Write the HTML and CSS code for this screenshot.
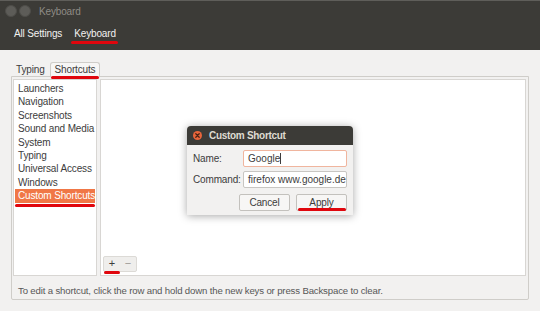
FILE: index.html
```html
<!DOCTYPE html>
<html lang="en">
<head>
    <meta charset="UTF-8">
    <meta name="viewport" content="width=device-width, initial-scale=1.0">
    <title>Keyboard</title>
    <link rel="stylesheet" href="styles.css">
</head>
<body>

    <div class="window">
        <!-- Dark header: title bar + breadcrumb -->
        <div class="header">
            <div class="titlebar">
                <span class="wbtn"></span>
                <span class="wbtn"></span>
                <span class="title">Keyboard</span>
            </div>
            <div class="crumbs">
                <span class="crumb">All Settings</span>
                <span class="crumb current mark">Keyboard</span>
            </div>
        </div>

        <div class="content">
            <div class="tabs">
                <span class="tab">Typing</span>
                <span class="tab active mark">Shortcuts</span>
            </div>

            <div class="notebook">
                <div class="panes">
                    <ul class="categories">
                        <li>Launchers</li>
                        <li>Navigation</li>
                        <li>Screenshots</li>
                        <li>Sound and Media</li>
                        <li>System</li>
                        <li>Typing</li>
                        <li>Universal Access</li>
                        <li>Windows</li>
                        <li class="selected mark">Custom Shortcuts</li>
                    </ul>
                    <div class="shortcuts">
                        <div class="toolbar">
                            <span class="tool mark">+</span>
                            <span class="tool dim">&minus;</span>
                        </div>
                    </div>
                </div>
                <p class="hint">To edit a shortcut, click the row and hold down the new keys or press Backspace to clear.</p>
            </div>
        </div>

        <!-- Custom shortcut dialog -->
        <div class="dialog">
            <div class="dialog-title">
                <span class="close">
                    <svg width="9" height="9" viewBox="0 0 9 9"><path d="M2.8 2.8 L6.2 6.2 M6.2 2.8 L2.8 6.2" stroke="#4a2414" stroke-width="1.3" stroke-linecap="round"/></svg>
                </span>
                <span>Custom Shortcut</span>
            </div>
            <div class="dialog-body">
                <div class="field">
                    <label>Name:</label>
                    <div class="entry focused">Google<span class="caret"></span></div>
                </div>
                <div class="field">
                    <label>Command:</label>
                    <div class="entry">firefox www.google.de</div>
                </div>
                <div class="buttons">
                    <span class="btn">Cancel</span>
                    <span class="btn mark">Apply</span>
                </div>
            </div>
        </div>
    </div>

</body>
</html>
```

FILE: styles.css
```css
body {
    margin: 0;
    font-family: "Liberation Sans", Arial, sans-serif;
    font-size: 10px;
    letter-spacing: -0.15px;
    color: #3c3c3c;
    background-color: #f2f1f0;
}

.window {
    position: relative;
    width: 540px;
    height: 311px;
    overflow: hidden;
}

.header {
    background-color: #3c3b37;
    height: 50px;
    border-top: 1px solid #5f5e5a;
    box-sizing: border-box;
}

.titlebar {
    display: flex;
    align-items: center;
    height: 20px;
    padding-left: 5px;
    gap: 2px;
}

.wbtn {
    width: 10px;
    height: 10px;
    border-radius: 50%;
    background-color: #5d5c58;
    border: 1px solid #4e4d49;
}

.title {
    margin-left: 6px;
    color: #8f8c86;
    font-size: 10px;
}

.crumbs {
    display: flex;
    gap: 12px;
    padding: 7px 0 0 14px;
    color: #f2f1f0;
    font-size: 10px;
}

.mark {
    position: relative;
}

.mark::after {
    content: "";
    position: absolute;
    left: 0;
    right: 0;
    bottom: -4px;
    height: 3px;
    border-radius: 2px;
    background-color: #e0060d;
}

.crumb.current::after {
    left: -3px;
    right: -2px;
    bottom: -5px;
}

.content {
    padding: 11px 11px 0;
}

.tabs {
    display: flex;
    align-items: flex-end;
    gap: 2px;
    padding-left: 2px;
    height: 15px;
}

.tab {
    padding: 0 3px;
    line-height: 13px;
}

.tab.active {
    border: 1px solid #cfcdc9;
    border-bottom: none;
    border-radius: 3px 3px 0 0;
    background-color: #f7f6f5;
    margin-bottom: -1px;
    line-height: 14px;
    padding: 0 4px;
}

.tab.active::after {
    bottom: -2px;
}

.notebook {
    border: 1px solid #cfcdc9;
    border-radius: 0 0 2px 2px;
    height: 224px;
    box-sizing: border-box;
    padding: 2px 2px 0 1px;
}

.panes {
    display: flex;
    gap: 3px;
    height: 197px;
}

.categories {
    list-style: none;
    margin: 0;
    padding: 2px 1px 0;
    width: 84px;
    box-sizing: border-box;
    background-color: #ffffff;
    border: 1px solid #d8d6d3;
}

.categories li {
    line-height: 13.4px;
    padding-left: 3px;
    white-space: nowrap;
}

.categories li.selected {
    background-color: #f07746;
    color: #ffffff;
}

.categories li.selected::after {
    bottom: -4px;
}

.shortcuts {
    flex: 1;
    background-color: #ffffff;
    border: 1px solid #d8d6d3;
    display: flex;
    flex-direction: column;
    justify-content: flex-end;
    padding: 0 0 3px 2px;
}

.toolbar {
    display: flex;
    width: 32px;
    height: 14px;
    border: 1px solid #dcdad6;
    border-radius: 2px;
    background-color: #efeeec;
}

.tool {
    flex: 1;
    text-align: center;
    line-height: 13px;
    font-size: 11px;
    color: #3c3c3c;
}

.tool.dim {
    color: #9a9894;
}

.tool.mark::after {
    bottom: -3px;
}

.hint {
    margin: 9px 0 0 5px;
    color: #575757;
    font-size: 9.6px;
}

.dialog {
    position: absolute;
    left: 187px;
    top: 126px;
    width: 166px;
    border-radius: 4px 4px 0 0;
    box-shadow: 0 1px 8px rgba(0, 0, 0, 0.35);
    background-color: #f2f1f0;
}

.dialog-title {
    display: flex;
    align-items: center;
    gap: 7px;
    height: 19px;
    padding-left: 6px;
    background-color: #3c3b37;
    border-radius: 4px 4px 0 0;
    color: #dfdbd2;
    font-weight: bold;
    font-size: 10px;
    letter-spacing: -0.3px;
}

.close {
    display: flex;
    width: 9px;
    height: 9px;
    border-radius: 50%;
    background-color: #e9653b;
}

.dialog-body {
    padding: 5px 6px 4px 6px;
}

.field {
    display: flex;
    align-items: center;
    justify-content: space-between;
    margin-bottom: 4px;
}

.entry {
    width: 104px;
    height: 17px;
    box-sizing: border-box;
    border: 1px solid #c8c6c2;
    border-radius: 2px;
    background-color: #ffffff;
    padding-left: 4px;
    line-height: 15px;
    letter-spacing: 0;
    white-space: nowrap;
    overflow: hidden;
}

.entry.focused {
    border-color: #f0b59e;
}

.caret {
    display: inline-block;
    width: 1px;
    height: 11px;
    background-color: #3c3c3c;
    vertical-align: -2px;
}

.buttons {
    display: flex;
    justify-content: flex-end;
    gap: 6px;
    margin-top: 6px;
}

.btn {
    width: 51px;
    height: 17px;
    box-sizing: border-box;
    border: 1px solid #c3c1bd;
    border-radius: 2px;
    background-color: #f7f6f5;
    text-align: center;
    line-height: 15px;
}

.btn.mark::after {
    bottom: -1px;
    left: 1px;
}
```
